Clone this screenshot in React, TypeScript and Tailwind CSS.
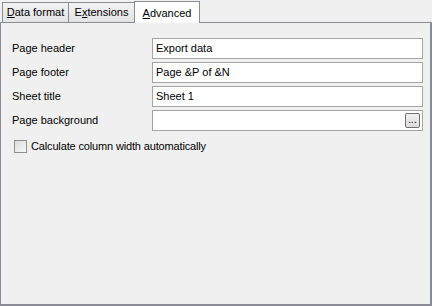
import React from "react";

const font = { fontFamily: "'Liberation Sans', Arial, sans-serif" };

function Field({ value, browse }: { value: string; browse?: boolean }) {
  return (
    <div className="relative h-[21px] w-[271px] border border-[#a5a5a5] bg-white flex items-center pl-[3px] text-[11px] text-black">
      {value}
      {browse && (
        <div className="absolute right-[2px] top-[2px] w-[15px] h-[15px] border border-[#707070] rounded-[2px] bg-gradient-to-b from-[#f2f2f2] to-[#dcdcdc] flex items-end justify-center text-[10px] leading-[10px] pb-[2px]">
          ...
        </div>
      )}
    </div>
  );
}

export default function App() {
  const rows = [
    { label: "Page header", value: "Export data" },
    { label: "Page footer", value: "Page &P of &N" },
    { label: "Sheet title", value: "Sheet 1" },
    { label: "Page background", value: "", browse: true },
  ];
  return (
    <div className="w-[432px] h-[306px] bg-[#f0f0f0] flex flex-col" style={font}>
      <div className="flex items-end h-[22px] pl-[2px] relative z-10">
        <div className="h-[20px] w-[67px] border border-[#898c95] border-b-0 bg-gradient-to-b from-[#f2f2f2] to-[#e3e3e3] flex items-center justify-center text-[11px] text-black whitespace-nowrap">
          <span><span className="underline">D</span>ata format</span>
        </div>
        <div className="h-[20px] w-[66px] border border-l-0 border-[#898c95] border-b-0 bg-gradient-to-b from-[#f2f2f2] to-[#e3e3e3] flex items-center justify-center text-[11px] text-black whitespace-nowrap">
          <span>E<span className="underline">x</span>tensions</span>
        </div>
        <div className="h-[22px] w-[66px] -ml-[1px] border border-[#898c95] border-b-0 bg-white flex items-start pt-[3px] justify-center text-[11px] text-black mb-[-1px] whitespace-nowrap">
          <span><span className="underline">A</span>dvanced</span>
        </div>
      </div>
      <div className="flex-1 border border-[#898c95] border-r-2 border-b-2 bg-[#f0f0f0] pt-[15px] pl-[11px]">
        <div className="flex flex-col gap-[3px]">
          {rows.map((r) => (
            <div key={r.label} className="flex items-center">
              <div className="w-[140px] text-[11px] text-black">{r.label}</div>
              <Field value={r.value} browse={r.browse} />
            </div>
          ))}
        </div>
        <div className="flex items-center mt-[7px] ml-[2px] gap-[4px]">
          <div className="w-[13px] h-[13px] border border-[#8f8f8f] bg-gradient-to-br from-[#dcdcdc] to-[#f8f8f8]" />
          <span className="text-[11px] text-black tracking-[-0.15px]">Calculate column width automatically</span>
        </div>
      </div>
    </div>
  );
}
